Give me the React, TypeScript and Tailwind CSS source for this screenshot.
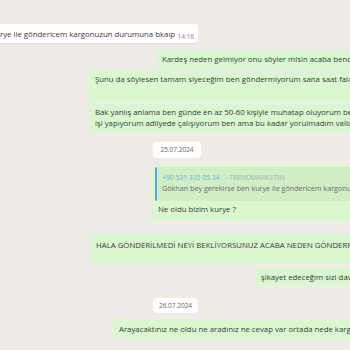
import React from "react";

const font = { fontFamily: '"Open Sans", "Noto Sans", sans-serif' };

export default function App() {
  return (
    <div
      className="w-[350px] h-[350px] overflow-hidden bg-[#efebe6] text-[#383838] text-[7.8px] leading-[12px] whitespace-nowrap flex flex-col"
      style={font}
    >
      {/* incoming */}
      <div className="mt-[24px] h-[19px] flex">
        <div className="ml-[-20px] w-[218px] bg-white rounded-[4px] flex items-center pl-[20px] pr-[4px] shadow-[0_1px_0_rgba(0,0,0,0.06)]">
          <span>rye ile göndericem kargonuzun durumuna bkaıp</span>
          <span className="ml-auto text-[6.5px] text-[#8a8a8a] mt-[6px]">14:16</span>
        </div>
      </div>

      {/* Kardeş */}
      <div className="mt-[7px] h-[18px] flex">
        <div className="ml-[157px] w-[220px] bg-[#d9f8d0] rounded-[4px] flex items-center pl-[5px]">
          Kardeş neden gelmiyor onu söyler misin acaba bende
        </div>
      </div>

      {/* Şunu */}
      <div className="mt-[2px] h-[31px] flex">
        <div className="ml-[89px] w-[300px] bg-[#d9f8d0] rounded-[4px] pl-[6px] pt-[3px]">
          Şunu da söylesen tamam siyeceğim ben göndermiyorum sana saat falan
        </div>
      </div>

      {/* Bak */}
      <div className="mt-[3px] h-[28px] flex">
        <div className="ml-[89px] w-[300px] bg-[#d9f8d0] rounded-[4px] pl-[6px] pt-[3px] leading-[11px]">
          <div>Bak yanlış anlama ben günde en az 50-60 kişiyle muhatap oluyorum ben</div>
          <div>işi yapıyorum adliyede çalışıyorum ben ama bu kadar yorulmadım valla</div>
        </div>
      </div>

      {/* date */}
      <div className="mt-[10px] h-[16px] flex">
        <div className="ml-[153px] w-[48px] bg-white rounded-[4px] flex items-center justify-center text-[6.5px] text-[#666]">
          25.07.2024
        </div>
      </div>

      {/* reply */}
      <div className="mt-[6px] h-[56px] flex">
        <div className="ml-[152px] w-[240px] bg-[#d9f8d0] rounded-[4px] p-[3px] flex flex-col">
          <div className="h-[34px] bg-[#cfeec6] rounded-[3px] flex">
            <div className="w-[2px] bg-[#53a9e0] rounded-l-[3px]" />
            <div className="pl-[5px] pt-[6px] flex flex-col">
              <div className="text-[6.8px] leading-[9px] text-[#5cb8d6]">
                +90 531 335 05 34 <span className="ml-[4px] text-[#a3b5a0]">~TRENDMARKETİN</span>
              </div>
              <div className="text-[7.2px] leading-[11px] text-[#6b6b6b] mt-[1px]">
                Gökhan bey gerekirse ben kurye ile göndericem kargonuzun
              </div>
            </div>
          </div>
          <div className="pl-[3px] pt-[2px]">Ne oldu bizim kurye ?</div>
        </div>
      </div>

      {/* HALA */}
      <div className="mt-[14px] h-[30px] flex">
        <div className="ml-[90px] w-[300px] bg-[#d9f8d0] rounded-[4px] pl-[6px] pt-[5px]">
          HALA GÖNDERİLMEDİ NEYİ BEKLİYORSUNUZ ACABA NEDEN GÖNDERMİYORSUNUZ
        </div>
      </div>

      {/* şikayet */}
      <div className="mt-[4px] h-[17px] flex">
        <div className="ml-[255px] w-[120px] bg-[#d9f8d0] rounded-[4px] flex items-center pl-[6px]">
          şikayet edeceğim sizi dava
        </div>
      </div>

      {/* date */}
      <div className="mt-[13px] h-[15px] flex">
        <div className="ml-[153px] w-[45px] bg-white rounded-[4px] flex items-center justify-center text-[6.5px] text-[#666]">
          26.07.2024
        </div>
      </div>

      {/* Arayacak */}
      <div className="mt-[6px] h-[19px] flex">
        <div className="ml-[113px] w-[260px] bg-[#d9f8d0] rounded-[4px] flex items-center pl-[6px]">
          Arayacaktınız ne oldu ne aradınız ne cevap var ortada nede kargo
        </div>
      </div>
    </div>
  );
}
